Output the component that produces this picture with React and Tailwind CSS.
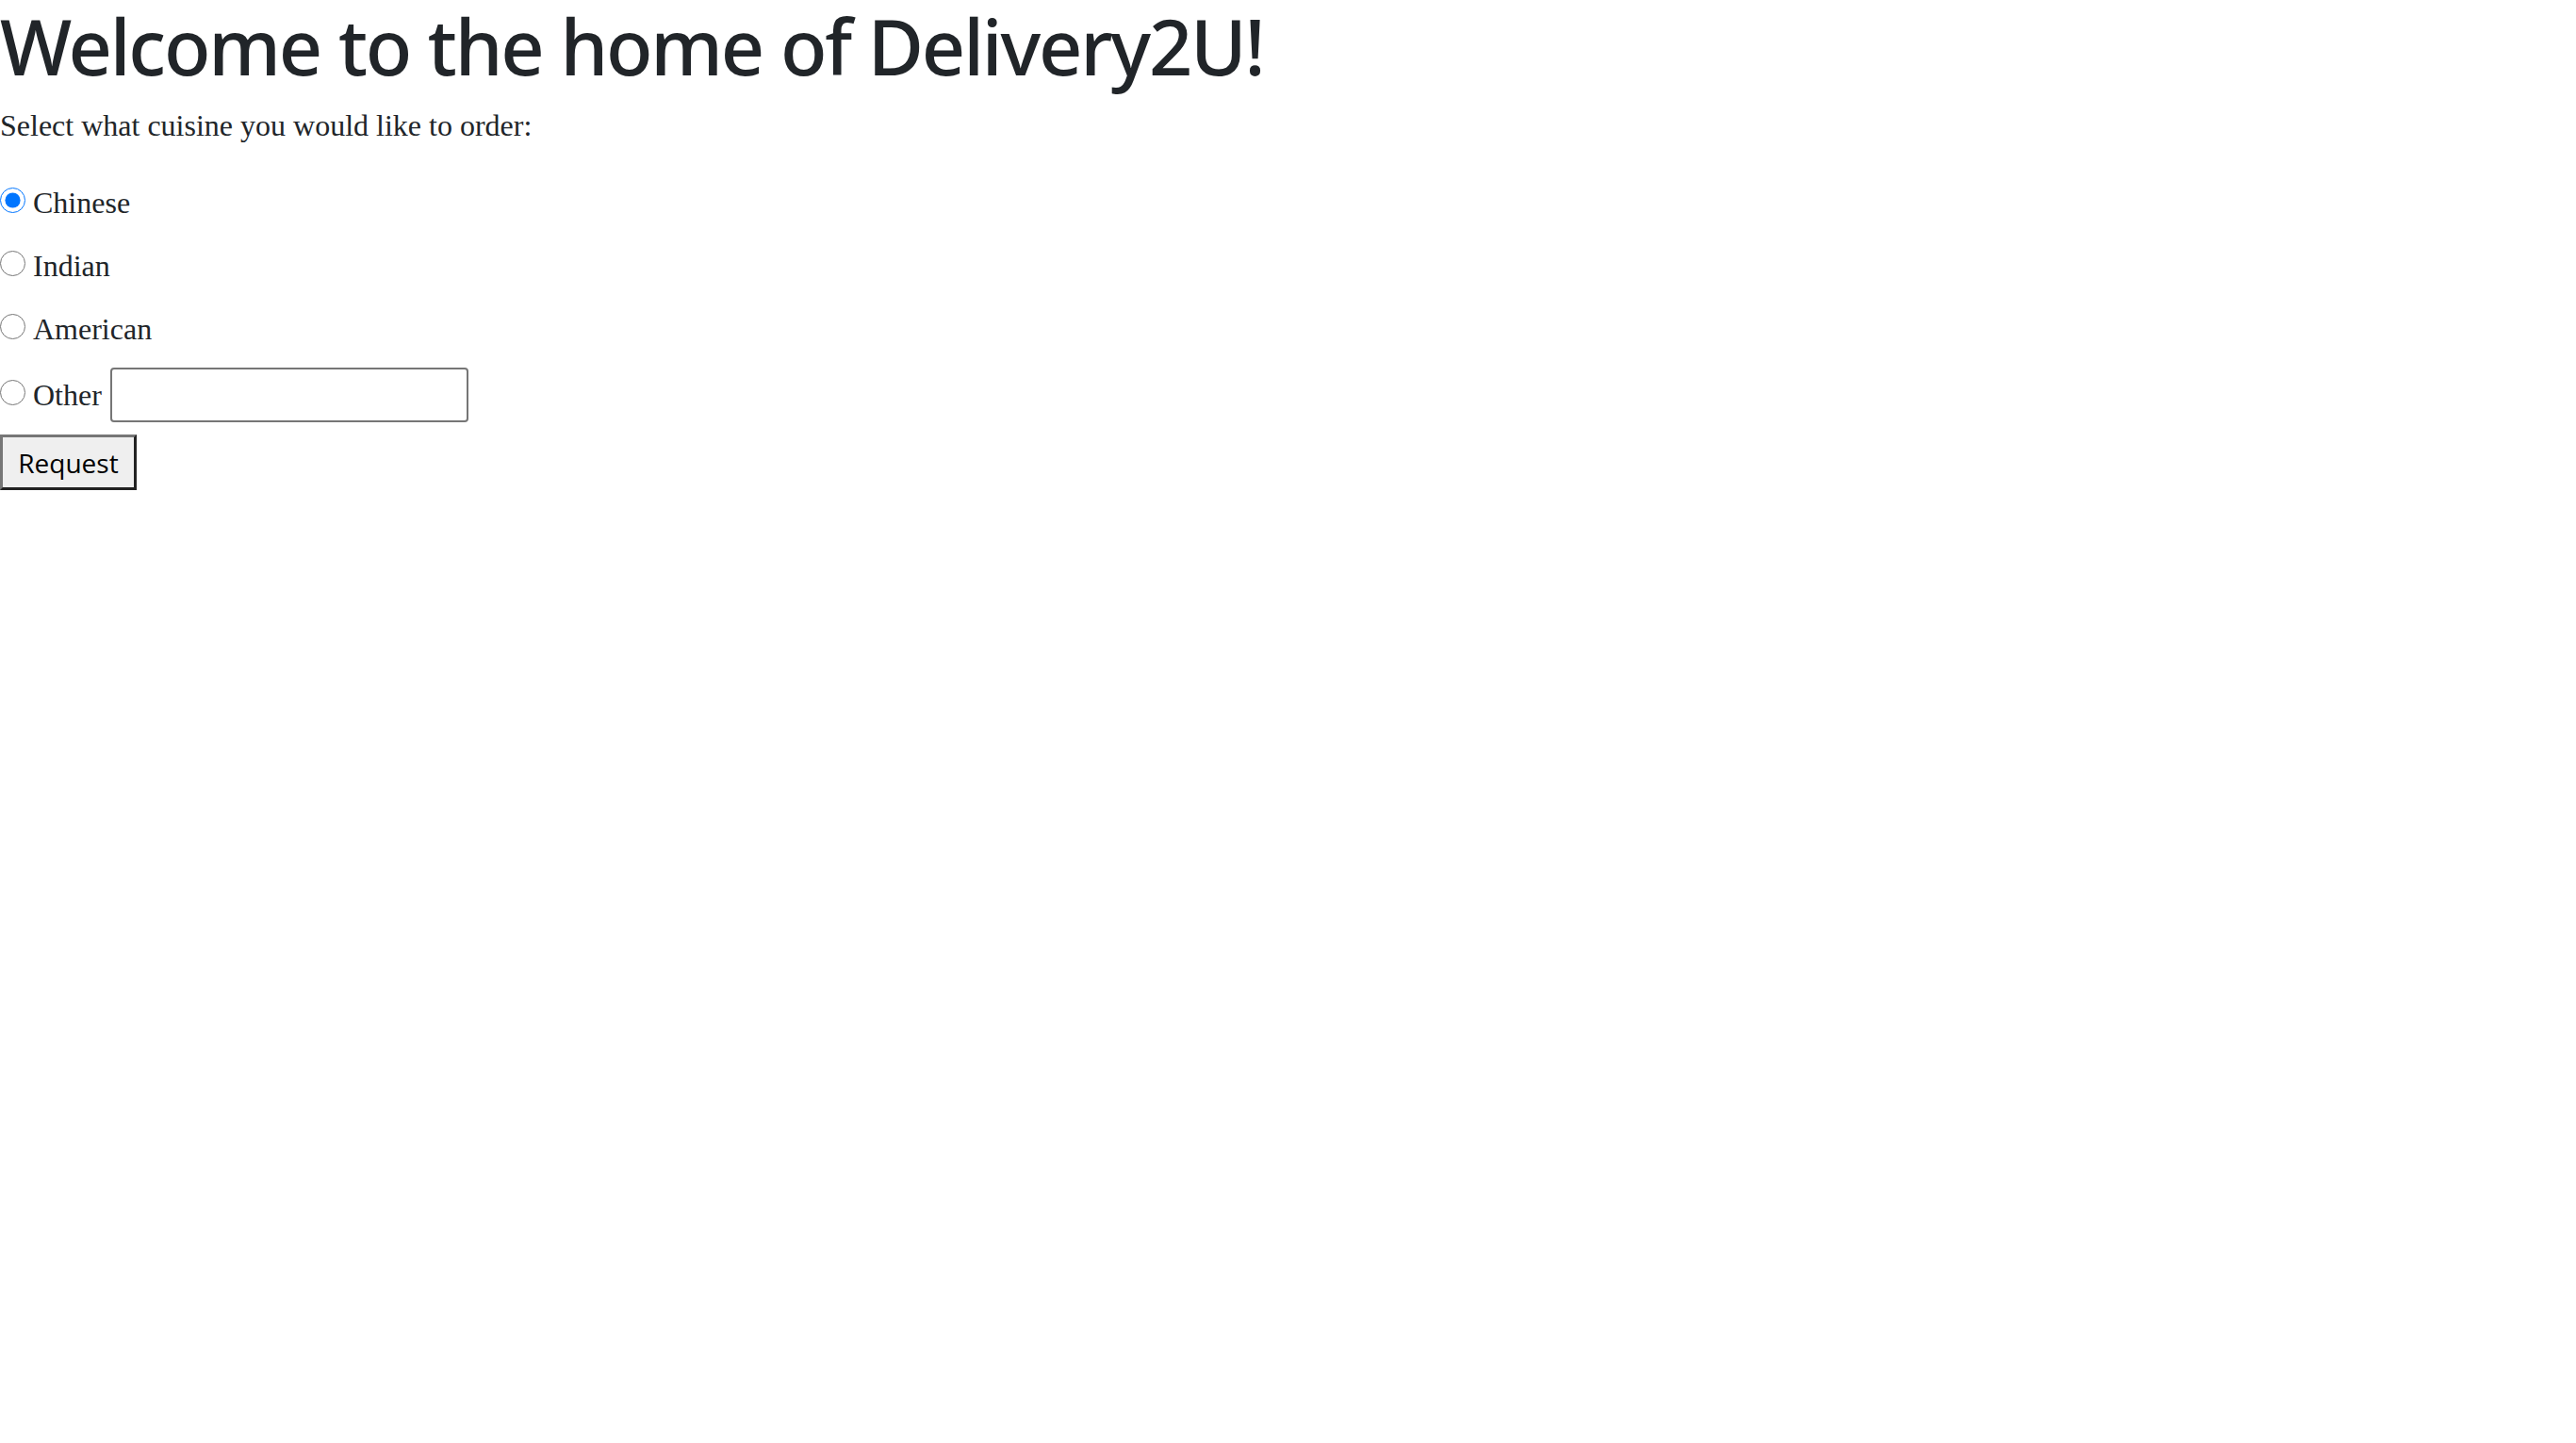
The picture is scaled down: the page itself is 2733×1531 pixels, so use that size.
import React, { useState } from "react";

const cuisines = ["Chinese", "Indian", "American"];

const App = () => {
  const [choice, setChoice] = useState("Chinese");
  const [other, setOther] = useState("");

  return (
    <div className="min-h-screen bg-white text-[#212529]">
      <h1 className="m-0 font-['Noto_Sans',sans-serif] text-[81px] font-medium leading-[97px] tracking-[-2.2px] whitespace-nowrap text-[#212529]">
        Welcome to the home of Delivery2U!
      </h1>

      <form
        className="font-['Liberation_Serif',serif] text-[32px] text-[#212529]"
        onSubmit={(e) => e.preventDefault()}
      >
        <p className="m-0 mt-[15px] leading-[42px]">Select what cuisine you would like to order:</p>

        {/* Cuisine options */}
        <div className="mt-[40px] flex flex-col gap-[25px]">
          {cuisines.map((c) => (
            <label key={c} className="flex h-[42px] items-baseline leading-[42px]">
              <input
                type="radio"
                name="cuisine"
                value={c}
                checked={choice === c}
                onChange={() => setChoice(c)}
                className="m-0 mr-[8px] h-[27px] w-[27px] accent-[#0075ff]"
              />
              {c}
            </label>
          ))}
        </div>

        <div className="mt-[20px] flex h-[58px] items-center">
          <label className="flex items-baseline leading-[42px]">
            <input
              type="radio"
              name="cuisine"
              value="Other"
              checked={choice === "Other"}
              onChange={() => setChoice("Other")}
              className="m-0 mr-[8px] h-[27px] w-[27px] accent-[#0075ff]"
            />
            Other
          </label>
          <input
            type="text"
            value={other}
            onChange={(e) => setOther(e.target.value)}
            className="ml-[9px] h-[58px] w-[380px] rounded-[4px] border-2 border-[#767676] bg-white px-2 font-['Liberation_Sans',sans-serif] text-[28px]"
          />
        </div>

        <button
          type="submit"
          className="mt-[13px] block h-[59px] w-[145px] border-[3px] border-t-[#767676] border-l-[#767676] border-r-[#222222] border-b-[#222222] bg-[#efefef] font-['Open_Sans',sans-serif] text-[28px] leading-none text-black"
        >
          Request
        </button>
      </form>
    </div>
  );
};

export default App;
